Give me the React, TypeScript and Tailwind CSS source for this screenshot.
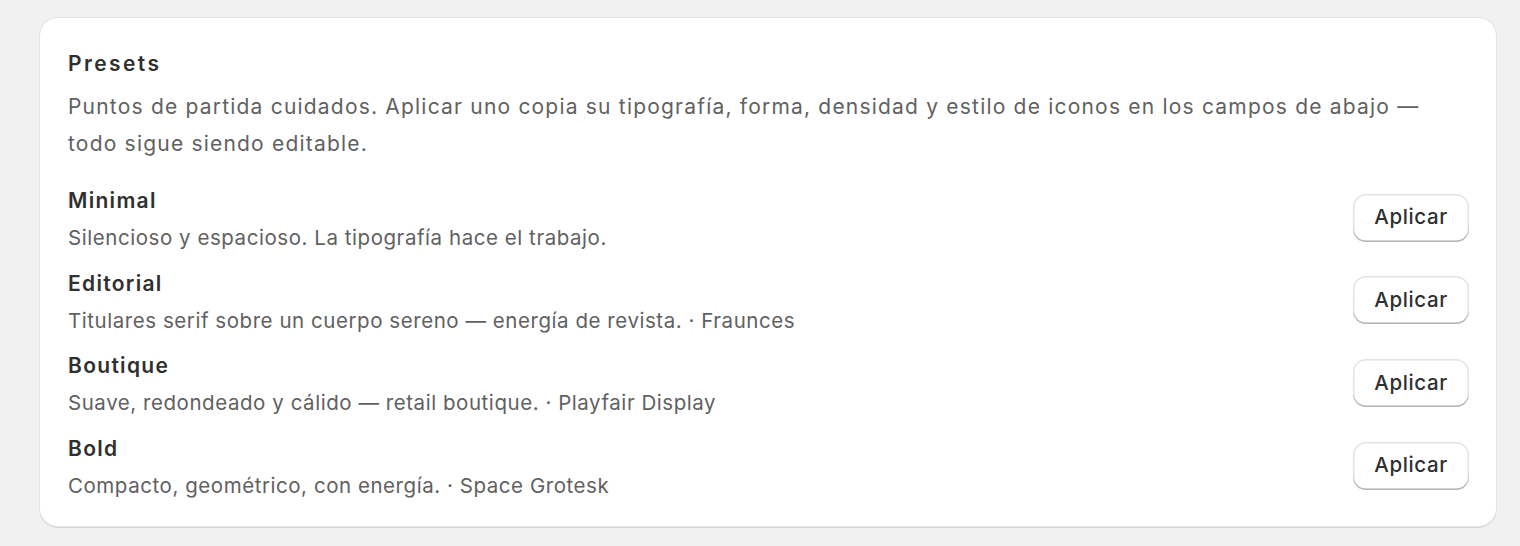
const PRESETS = [
  { name: "Minimal", desc: "Silencioso y espacioso. La tipografía hace el trabajo." },
  { name: "Editorial", desc: "Titulares serif sobre un cuerpo sereno — energía de revista. · Fraunces" },
  { name: "Boutique", desc: "Suave, redondeado y cálido — retail boutique. · Playfair Display" },
  { name: "Bold", desc: "Compacto, geométrico, con energía. · Space Grotesk" },
];

export default function App() {
  return (
    <div
      className="min-h-[546px] bg-[#f1f1f1] pl-[40px] pr-[24px] pt-[18px] pb-[20px]"
      style={{ fontFamily: "Inter, 'Noto Sans', sans-serif" }}
    >
      <section className="rounded-[18px] bg-white px-[28px] pt-[27px] pb-[22px] shadow-[0_0_0_1px_#e3e3e3,0_1.5px_0_0.5px_#d6d6d6]">
        <h2 className="text-[21px] leading-[37px] font-semibold tracking-[2.4px] text-[#303030]">Presets</h2>
        <p className="mt-[6px] text-[21px] leading-[37px] tracking-[1.2px] text-[#616161]">
          Puntos de partida cuidados. Aplicar uno copia su tipografía, forma, densidad y estilo de iconos en los
          campos de abajo — todo sigue siendo editable.
        </p>

        <div className="mt-[20px] flex flex-col gap-[8.7px]">
          {PRESETS.map((p) => (
            <div key={p.name} className="flex items-center justify-between">
              <div>
                <div className="text-[21px] leading-[37px] font-semibold tracking-[1.3px] text-[#303030]">
                  {p.name}
                </div>
                <div className="text-[20.5px] leading-[37px] tracking-[0.55px] text-[#616161]">{p.desc}</div>
              </div>
              <button className="-mr-[1px] -mt-[3px] h-[48px] w-[116px] rounded-[13px] bg-white text-[20.5px] font-medium tracking-[0.6px] text-[#303030] shadow-[inset_0_-1.5px_0_0_#b5b5b5,inset_0_0_0_1.5px_#e3e3e3]">
                Aplicar
              </button>
            </div>
          ))}
        </div>
      </section>
    </div>
  );
}
